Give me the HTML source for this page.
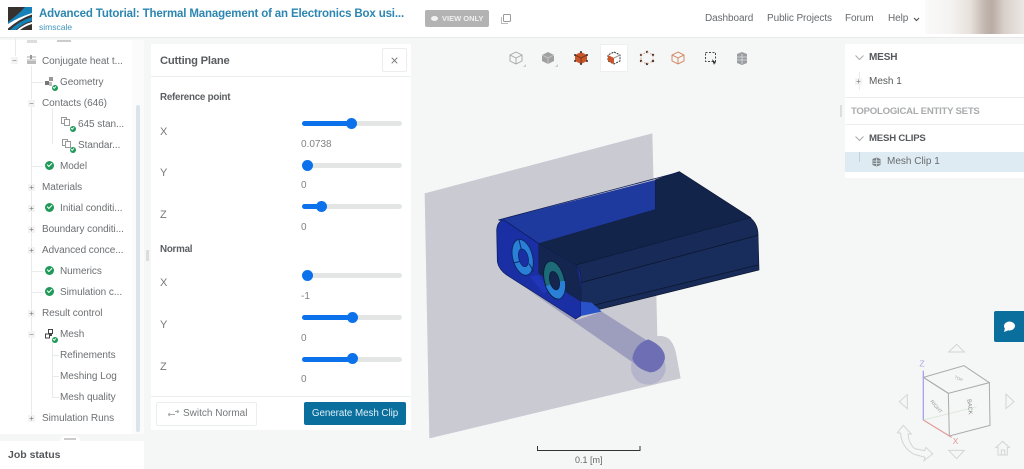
<!DOCTYPE html>
<html><head><meta charset="utf-8"><title>Cutting Plane</title>
<style>
html,body{margin:0;padding:0}
body{width:1024px;height:469px;overflow:hidden;position:relative;background:#f5f6f6;font-family:"Liberation Sans",sans-serif;color:#5f6265;font-size:10.5px}
.a{position:absolute;white-space:nowrap}
.t{position:absolute;white-space:nowrap;line-height:14px;font-size:10px;letter-spacing:-.05px;color:#6c6f72;margin-top:1px}
.h{position:absolute;width:1px;background:#e9eaeb}
.w{position:absolute;height:1px;background:#e9eaeb}
.pm{position:absolute;width:7px;height:7px;background:#f3f3f3;color:#777;font-size:8px;line-height:7px;text-align:center}
.ck{position:absolute;width:9px;height:9px;border-radius:50%;background:#1f9a58}
.ck:after{content:"";position:absolute;left:2.3px;top:2.2px;width:3.6px;height:1.7px;border-left:1.2px solid #fff;border-bottom:1.2px solid #fff;transform:rotate(-45deg)}
.sm{width:6px;height:6px}
.sm:after{left:1.3px;top:1.3px;width:2.4px;height:1px;border-left:1px solid #fff;border-bottom:1px solid #fff}
.tr{position:absolute;left:302px;width:100px;height:5px;border-radius:3px;background:#e4e5e5}
.fl{position:absolute;left:302px;height:5px;border-radius:3px;background:#0b72ec}
.th{position:absolute;width:11px;height:11px;border-radius:50%;background:#0b72ec}
.l{position:absolute;left:160px;font-size:11px;color:#75787b;line-height:14px;margin-top:1px}
.v{position:absolute;left:301px;font-size:10px;color:#808386;line-height:13px;margin-top:1px}
.b{position:absolute;left:160px;font-size:9.8px;letter-spacing:-.25px;font-weight:bold;color:#5c5f62;line-height:13px;margin-top:1px}
.n{position:absolute;top:12px;font-size:10px;letter-spacing:-.08px;line-height:14px;color:#66696c}
</style></head><body>

<!-- top bar -->
<div class="a" style="left:0;top:0;width:1024px;height:37px;background:#fff;border-bottom:1px solid #e8e9e9"></div>
<svg class="a" style="left:7px;top:6px" width="26" height="25" viewBox="0 0 26 25">
<rect x="1" y="1" width="24" height="23" fill="#38322f"/>
<path d="M25 1 L25 7 Q12 12 1 22 L1 16 Q12 8 18 1Z" fill="#1482b8"/>
<path d="M25 8.5 Q12 13 1 22.5 L1 18 Q12 11 25 7Z" fill="#fff"/>
<path d="M25 11 Q12 15 3 24 L9 24 Q16 17 25 15Z" fill="#1482b8"/>
<path d="M25 16 Q17 18 10 24 L13 24 Q18 20 25 18Z" fill="#fff"/>
</svg>
<div class="a" style="left:39px;top:6px;font-size:11.5px;letter-spacing:-.15px;font-weight:bold;color:#2c86b1;line-height:16px">Advanced Tutorial: Thermal Management of an Electronics Box usi...</div>
<div class="a" style="left:39px;top:21px;font-size:8.5px;color:#3f94bd;line-height:12px">simscale</div>
<div class="a" style="left:425px;top:10px;width:64px;height:17px;background:#b3b3b3;border-radius:2px"></div>
<div class="a" style="left:431px;top:16px;width:7px;height:5px;background:#f2f2f2;border-radius:50%"></div>
<div class="a" style="left:442px;top:13px;font-size:7.5px;font-weight:bold;color:#f0f0f0;line-height:11px">VIEW ONLY</div>
<svg class="a" style="left:501px;top:14px" width="10" height="10"><rect x="2.5" y=".5" width="7" height="7" rx="1" fill="none" stroke="#999"/><path d="M.5 3 V9.5 H7" fill="none" stroke="#bbb"/></svg>
<div class="n" style="left:705px">Dashboard</div>
<div class="n" style="left:767px">Public Projects</div>
<div class="n" style="left:845px">Forum</div>
<div class="n" style="left:888px">Help</div>
<svg class="a" style="left:913px;top:17px" width="7" height="5"><path d="M1 1 L3.5 3.5 L6 1" fill="none" stroke="#555" stroke-width="1.2"/></svg>
<div class="a" style="left:925px;top:0;width:99px;height:34px;background:linear-gradient(90deg,#fafafa 0%,#f5f3f1 25%,#e8e2dd 45%,#bfb3ab 62%,#b9aca4 68%,#d8d0ca 80%,#ebe8e5 100%)"></div>

<!-- sidebar -->
<div class="a" style="left:0;top:40px;width:132px;height:394px;background:#fff"></div>
<div class="a" style="left:132px;top:40px;width:12px;height:394px;background:#fbfbfb"></div>
<div class="a" style="left:136px;top:105px;width:4px;height:327px;background:#dbe4ea;border-radius:2px"></div>
<div class="a" style="left:146px;top:250px;width:3px;height:11px;background:#dcdcdc"></div>
<div class="h" style="left:15px;top:38px;height:18px"></div>
<div class="h" style="left:31px;top:66px;height:352px"></div>
<div class="h" style="left:52px;top:108px;height:36px"></div>
<div class="h" style="left:52px;top:340px;height:58px"></div>
<div class="w" style="left:31px;top:82px;width:12px"></div>
<div class="w" style="left:31px;top:166px;width:12px"></div>
<div class="w" style="left:31px;top:271px;width:12px"></div>
<div class="w" style="left:31px;top:292px;width:12px"></div>
<div class="w" style="left:52px;top:355px;width:7px"></div>
<div class="w" style="left:52px;top:376px;width:7px"></div>
<div class="w" style="left:52px;top:397px;width:7px"></div>
<div class="a" style="left:27px;top:40px;width:10px;height:3px;background:#ddd"></div>
<div class="a" style="left:57px;top:40px;width:14px;height:2px;background:#ccc"></div>

<div class="pm" style="left:11px;top:57px">&minus;</div>
<svg class="a" style="left:26px;top:55px" width="11" height="10"><path d="M1 2H10M1 5H10" stroke="#aaa"/><rect x="1" y="6" width="9" height="3" fill="#bbb"/><rect x="4" y="0" width="2" height="4" fill="#999"/></svg>
<div class="t" style="left:42px;top:54px">Conjugate heat t...</div>
<svg class="a" style="left:44px;top:77px" width="11" height="10"><rect x="5" y="0" width="4" height="4" fill="#999"/><rect x="1" y="4" width="4" height="4" fill="#777"/><rect x="5" y="5" width="3" height="4" fill="#bbb"/></svg>
<div class="ck sm" style="left:52px;top:85px"></div>
<div class="t" style="left:60px;top:75px">Geometry</div>
<div class="pm" style="left:28px;top:100px">&minus;</div>
<div class="t" style="left:42px;top:96px">Contacts (646)</div>
<svg class="a" style="left:61px;top:117px" width="11" height="11"><rect x=".5" y=".5" width="5" height="6" fill="#fff" stroke="#999"/><rect x="3.5" y="2.5" width="5" height="6" fill="#fff" stroke="#999"/></svg>
<div class="ck sm" style="left:70px;top:126px"></div>
<div class="t" style="left:78px;top:117px">645 stan...</div>
<svg class="a" style="left:62px;top:139px" width="11" height="11"><rect x=".5" y=".5" width="5" height="6" fill="#fff" stroke="#999"/><rect x="3.5" y="2.5" width="5" height="6" fill="#fff" stroke="#999"/></svg>
<div class="ck sm" style="left:70px;top:147px"></div>
<div class="t" style="left:78px;top:138px">Standar...</div>
<div class="ck" style="left:45px;top:161px"></div>
<div class="t" style="left:60px;top:159px">Model</div>
<div class="pm" style="left:28px;top:184px">+</div>
<div class="t" style="left:42px;top:180px">Materials</div>
<div class="pm" style="left:28px;top:205px">+</div>
<div class="ck" style="left:45px;top:203px"></div>
<div class="t" style="left:60px;top:201px">Initial conditi...</div>
<div class="pm" style="left:28px;top:226px">+</div>
<div class="t" style="left:42px;top:222px">Boundary conditi...</div>
<div class="pm" style="left:28px;top:247px">+</div>
<div class="t" style="left:42px;top:243px">Advanced conce...</div>
<div class="ck" style="left:45px;top:266px"></div>
<div class="t" style="left:60px;top:264px">Numerics</div>
<div class="ck" style="left:45px;top:287px"></div>
<div class="t" style="left:60px;top:285px">Simulation c...</div>
<div class="pm" style="left:28px;top:310px">+</div>
<div class="t" style="left:42px;top:306px">Result control</div>
<div class="pm" style="left:28px;top:331px">&minus;</div>
<svg class="a" style="left:44px;top:329px" width="11" height="11"><rect x="4.5" y=".5" width="4" height="4" fill="none" stroke="#444"/><rect x="1.5" y="5" width="4" height="4" fill="none" stroke="#444"/><rect x="6" y="4" width="2" height="3" fill="#444"/></svg>
<div class="ck sm" style="left:52px;top:337px"></div>
<div class="t" style="left:60px;top:327px">Mesh</div>
<div class="t" style="left:60px;top:348px">Refinements</div>
<div class="t" style="left:60px;top:369px">Meshing Log</div>
<div class="t" style="left:60px;top:390px">Mesh quality</div>
<div class="pm" style="left:28px;top:415px">+</div>
<div class="t" style="left:42px;top:411px">Simulation Runs</div>

<!-- job status -->
<div class="a" style="left:0;top:441px;width:144px;height:28px;background:#fff"></div>
<div class="a" style="left:60px;top:436px;width:20px;height:6px;background:#fff;border-radius:5px 5px 0 0"></div>
<div class="a" style="left:64px;top:438px;width:12px;height:2px;background:#ccc"></div>
<div class="a" style="left:8px;top:448px;font-size:10.5px;font-weight:bold;color:#55585b;line-height:15px">Job status</div>

<!-- cutting plane panel -->
<div class="a" style="left:151px;top:44px;width:260px;height:386px;background:#fff"></div>
<div class="w" style="left:151px;top:76px;width:260px;background:#eceded"></div>
<div class="a" style="left:160px;top:54px;font-size:11.2px;letter-spacing:-.2px;font-weight:bold;color:#5a5d60;line-height:15px">Cutting Plane</div>
<div class="a" style="left:382px;top:48px;width:23px;height:22px;border:1px solid #eceded;border-radius:2px"></div>
<svg class="a" style="left:391px;top:57px" width="7" height="7"><path d="M.7 .7L6.3 6.3M6.3 .7L.7 6.3" stroke="#777" stroke-width="1"/></svg>

<div class="b" style="top:90px">Reference point</div>
<div class="l" style="top:124px">X</div>
<div class="tr" style="top:121px"></div><div class="fl" style="top:121px;width:50px"></div><div class="th" style="left:346px;top:118px"></div>
<div class="v" style="top:137px">0.0738</div>
<div class="l" style="top:165px">Y</div>
<div class="tr" style="top:163px"></div><div class="th" style="left:302px;top:160px"></div>
<div class="v" style="top:178px">0</div>
<div class="l" style="top:207px">Z</div>
<div class="tr" style="top:204px"></div><div class="fl" style="top:204px;width:20px"></div><div class="th" style="left:316px;top:201px"></div>
<div class="v" style="top:220px">0</div>

<div class="b" style="top:242px">Normal</div>
<div class="l" style="top:275px">X</div>
<div class="tr" style="top:273px"></div><div class="th" style="left:302px;top:270px"></div>
<div class="v" style="top:289px">-1</div>
<div class="l" style="top:317px">Y</div>
<div class="tr" style="top:315px"></div><div class="fl" style="top:315px;width:50px"></div><div class="th" style="left:347px;top:312px"></div>
<div class="v" style="top:331px">0</div>
<div class="l" style="top:359px">Z</div>
<div class="tr" style="top:357px"></div><div class="fl" style="top:357px;width:50px"></div><div class="th" style="left:347px;top:353px"></div>
<div class="v" style="top:372px">0</div>

<div class="w" style="left:151px;top:396px;width:260px;background:#eceded"></div>
<div class="a" style="left:156px;top:402px;width:99px;height:22px;border:1px solid #eceded;border-radius:2px"></div>
<svg class="a" style="left:168px;top:409px" width="11" height="8"><path d="M0 5.5H7M7 2.5H11M2 4L0 5.5L2 7M9 1L11 2.5L9 4" fill="none" stroke="#aaa"/></svg>
<div class="a" style="left:183px;top:407px;font-size:10px;color:#74777a;line-height:14px">Switch Normal</div>
<div class="a" style="left:304px;top:402px;width:102px;height:23px;background:#0b6f9e;border-radius:2px;color:#dff0f7;font-size:9.8px;letter-spacing:-.05px;line-height:24px;text-align:center">Generate Mesh Clip</div>

<!-- toolbar -->
<div class="a" style="left:600px;top:44px;width:26px;height:26px;background:#fff;border:1px solid #eeefef"></div>
<svg class="a" style="left:500px;top:44px" width="260" height="28" viewBox="0 0 260 28">
<g fill="none" stroke="#a5a5a5" stroke-width=".9"><path d="M16 8l6 3v6l-6 3-6-3v-6zM10 11l6 3 6-3M16 14v6"/></g>
<path d="M23 23h3v-3z" fill="#ccc"/>
<path d="M48 8l6 3v6l-6 3-6-3v-6z" fill="#a0a0a0"/><path d="M42 11l6 3 6-3M48 14v6" stroke="#c4c4c4" fill="none"/>
<path d="M55 23h3v-3z" fill="#ccc"/>
<path d="M81 8l6 3v6l-6 3-6-3v-6z" fill="#c8562a"/><path d="M75 11l6 3 6-3M81 14v6" stroke="#7a3518" fill="none"/>
<g fill="#33302e"><circle cx="81" cy="8" r="1"/><circle cx="87" cy="11" r="1"/><circle cx="87" cy="17" r="1"/><circle cx="81" cy="20" r="1"/><circle cx="75" cy="17" r="1"/><circle cx="75" cy="11" r="1"/></g>
<path d="M114 8l6 3v6l-6 3-6-3v-6z" fill="#fff" stroke="#333" stroke-dasharray="2 1"/><path d="M108 11l6 3v6l-6-3z" fill="#c8562a"/><path d="M114 14l6-3" stroke="#999"/>
<g fill="#4a3328"><circle cx="147" cy="8" r="1.2"/><circle cx="153" cy="11" r="1.2"/><circle cx="153" cy="17" r="1.2"/><circle cx="147" cy="20" r="1.2"/><circle cx="141" cy="17" r="1.2"/><circle cx="141" cy="11" r="1.2"/></g>
<path d="M147 8l6 3v6l-6 3-6-3v-6z" fill="none" stroke="#d69a7f" stroke-dasharray="1.5 2"/>
<g fill="none" stroke="#d48a68" stroke-width="1"><path d="M178 8l6 3v6l-6 3-6-3v-6zM172 11l6 3 6-3M178 14v6"/></g>
<rect x="205.500" y="8.500" width="10" height="9" fill="none" stroke="#444" stroke-dasharray="2 1.500"/>
<path d="M212 15l4 4-1.500.5-.5 1.500z" fill="#222"/>
<path d="M242 8l5 2v9l-5 2-5-2v-9z" fill="#9a9ea1"/><path d="M242 10v10M237 13l10 0M237 16l10 0" stroke="#ddd" stroke-width=".8"/>
</svg>

<!-- 3D view -->
<svg class="a" style="left:410px;top:130px" width="370" height="310" viewBox="0 0 1110 930">
<path d="M44,190 L727,10 L742,618 Q790,612 800,680 L812,745 L58,925Z" fill="#c9cad2"/>
<circle cx="715" cy="712" r="52" fill="#b4b4ca"/>
<path d="M355,480 L500,570 L575,545 L740,650 L715,725 L665,695Z" fill="#9d9dbd"/>
<path d="M715,628 Q765,650 765,685 Q755,725 720,727 Q675,715 667,685 Q675,640 715,628Z" fill="#6e6eb5"/>
<!-- right side face -->
<path d="M497,405 L1020,263 Q1042,280 1044,310 L1047,420 L512,552 L512,440 Q508,418 497,405Z" fill="#182b58" stroke="#0c1730" stroke-width="2"/>
<path d="M512,455 L1044,316 L1046,405 L512,535Z" fill="#192d5c"/>
<path d="M512,458 L1044,316M512,535 L1044,405" stroke="#0c1730" stroke-width="2.500" fill="none"/>
<!-- top -->
<polygon points="735,150 808,125 1022,263 497,405 385,340 735,238" fill="#13244a" stroke="#0e1b3a" stroke-width="2"/>
<polygon points="265,270 735,150 735,238 385,340" fill="#1f3a9e"/>
<path d="M265,270 L810,126" stroke="#0b1a55" stroke-width="2.500" fill="none"/>
<!-- front face -->
<path d="M283,271 Q262,272 260,300 L262,395 Q266,418 290,435 L497,567 L513,557 L513,440 Q510,418 497,405 L385,340 Z" fill="#1a2fa4" stroke="#0b1a55" stroke-width="2"/>
<path d="M385,340 L497,405 Q512,425 513,515 L480,495 L385,430Z" fill="#14254f"/>
<path d="M513,515 L545,518 L575,545 L513,558Z" fill="#2a52c8"/>
<path d="M360,440 L385,435 L420,480 L400,490Z" fill="#2036b8"/>
<!-- fans -->
<g transform="rotate(-14 338 382)">
<ellipse cx="338" cy="382" rx="30" ry="55" fill="#2a7fd6" stroke="#0c2a6a" stroke-width="3"/>
<ellipse cx="340" cy="384" rx="14" ry="27" fill="#1a2fa4" stroke="#0c2a6a" stroke-width="2.500"/>
<path d="M309,392L326,392M340,328L340,357M352,405L360,432" stroke="#0c2a6a" stroke-width="3"/>
</g>
<g transform="rotate(-14 433 450)">
<ellipse cx="433" cy="450" rx="30" ry="58" fill="#1d6a78" stroke="#0a1f3c" stroke-width="3"/>
<path d="M404,462 Q412,505 435,508 Q458,500 463,460 L447,458 Q445,478 430,478 Q422,475 418,460Z" fill="#2a7fd6"/>
<ellipse cx="433" cy="452" rx="14" ry="28" fill="#14254f" stroke="#0a1f3c" stroke-width="2.500"/>
</g>
</svg>

<!-- scale bar -->
<svg class="a" style="left:530px;top:445px" width="115" height="12"><path d="M7.500 1V5.500H110V1" fill="none" stroke="#333" stroke-width="1"/></svg>
<div class="a" style="left:575px;top:454px;font-size:9px;color:#666;line-height:12px">0.1 [m]</div>

<!-- right panel -->
<div class="a" style="left:845px;top:44px;width:179px;height:134px;background:#fff"></div>
<div class="w" style="left:845px;top:97px;width:179px;background:#eceded"></div>
<div class="w" style="left:845px;top:124px;width:179px;background:#eceded"></div>
<div class="a" style="left:840px;top:105px;width:2px;height:12px;background:#ddd"></div>
<svg class="a" style="left:855px;top:55px" width="9" height="6"><path d="M.5 .5L4.500 4.500L8.500 .5" fill="none" stroke="#aaa"/></svg>
<div class="a" style="left:869px;top:51px;font-size:10px;letter-spacing:-.15px;font-weight:bold;color:#55585b;line-height:14px">MESH</div>
<div class="h" style="left:859px;top:72px;height:18px"></div>
<div class="pm" style="left:855px;top:78px">+</div>
<div class="a" style="left:869px;top:75px;font-size:10px;color:#55585b;line-height:14px">Mesh 1</div>
<div class="a" style="left:851px;top:105px;font-size:9.6px;font-weight:bold;color:#a9abad;line-height:14px;letter-spacing:-.25px">TOPOLOGICAL ENTITY SETS</div>
<svg class="a" style="left:855px;top:136px" width="9" height="6"><path d="M.5 .5L4.500 4.500L8.500 .5" fill="none" stroke="#aaa"/></svg>
<div class="a" style="left:869px;top:132px;font-size:9.6px;font-weight:bold;color:#55585b;line-height:14px;letter-spacing:-.2px">MESH CLIPS</div>
<div class="a" style="left:845px;top:152px;width:179px;height:20px;background:#deebf2"></div>
<div class="h" style="left:859px;top:152px;height:10px;background:#c5d0d6"></div>
<svg class="a" style="left:872px;top:157px" width="9" height="10"><path d="M4.500 .5l4 1.500v6l-4 1.500-4-1.500v-6z" fill="#7c8285"/><path d="M4.500 1v8M1 4h7M1 6.500h7" stroke="#deebf2" stroke-width=".7"/></svg>
<div class="a" style="left:887px;top:155px;font-size:10px;color:#696c6f;line-height:14px">Mesh Clip 1</div>

<!-- chat -->
<div class="a" style="left:994px;top:311px;width:30px;height:31px;background:#0b6f9e;border-radius:2px 0 0 2px"></div>
<svg class="a" style="left:1003px;top:321px" width="13" height="12"><ellipse cx="6.500" cy="5" rx="5.500" ry="4.500" fill="#fff"/><path d="M2 7L1 11L6 9Z" fill="#fff"/></svg>

<!-- nav cube -->
<svg class="a" style="left:880px;top:300px" width="144" height="169" viewBox="0 0 432 507">
<g fill="none" stroke="#d4d5d6" stroke-width="3">
<path d="M206,156 L230,133 L253,156Z"/>
<path d="M206,451 L253,451 L230,476Z"/>
<path d="M82,284 L82,326 L58,305Z"/>
<path d="M378,282 L378,326 L402,305Z"/>
<path d="M70,376 L52,398 L62,400 Q64,440 100,462 L135,472 L132,482 L158,462 L138,442 L134,452 L104,446 Q86,430 84,402 L94,402Z"/>
<path d="M348,442 L368,424 L388,442 L382,442 L382,465 L354,465 L354,442Z M364,465 V450 H374 V465"/>
</g>
<path d="M130,360 L290,320" stroke="#d3e6d0" stroke-width="2"/>
<g fill="none" stroke="#a9aaac" stroke-width="3">
<path d="M130,232 L252,197 L328,248 L205,280Z"/>
<path d="M205,280 L208,408 L330,376 L328,248"/>
<path d="M130,232 L205,280"/>
</g>
<path d="M130,360 L215,412" stroke="#e39a9a" stroke-width="3.500"/>
<path d="M130,212 V360" stroke="#a5a5e8" stroke-width="4"/>
<text x="218" y="432" font-family="Liberation Sans" font-size="26" fill="#e39a9a">X</text>
<text x="118" y="200" font-family="Liberation Sans" font-size="26" fill="#a9a9e6">Z</text>
<text x="0" y="0" font-family="Liberation Sans" font-size="17" fill="#888" transform="translate(262,298) rotate(84)">BACK</text>
<text x="0" y="0" font-family="Liberation Sans" font-size="15" fill="#999" transform="translate(150,305) rotate(50)">RIGHT</text>
<text x="0" y="0" font-family="Liberation Sans" font-size="13" fill="#aaa" transform="translate(222,234) rotate(25)">TOP</text>
</svg>
</body></html>
